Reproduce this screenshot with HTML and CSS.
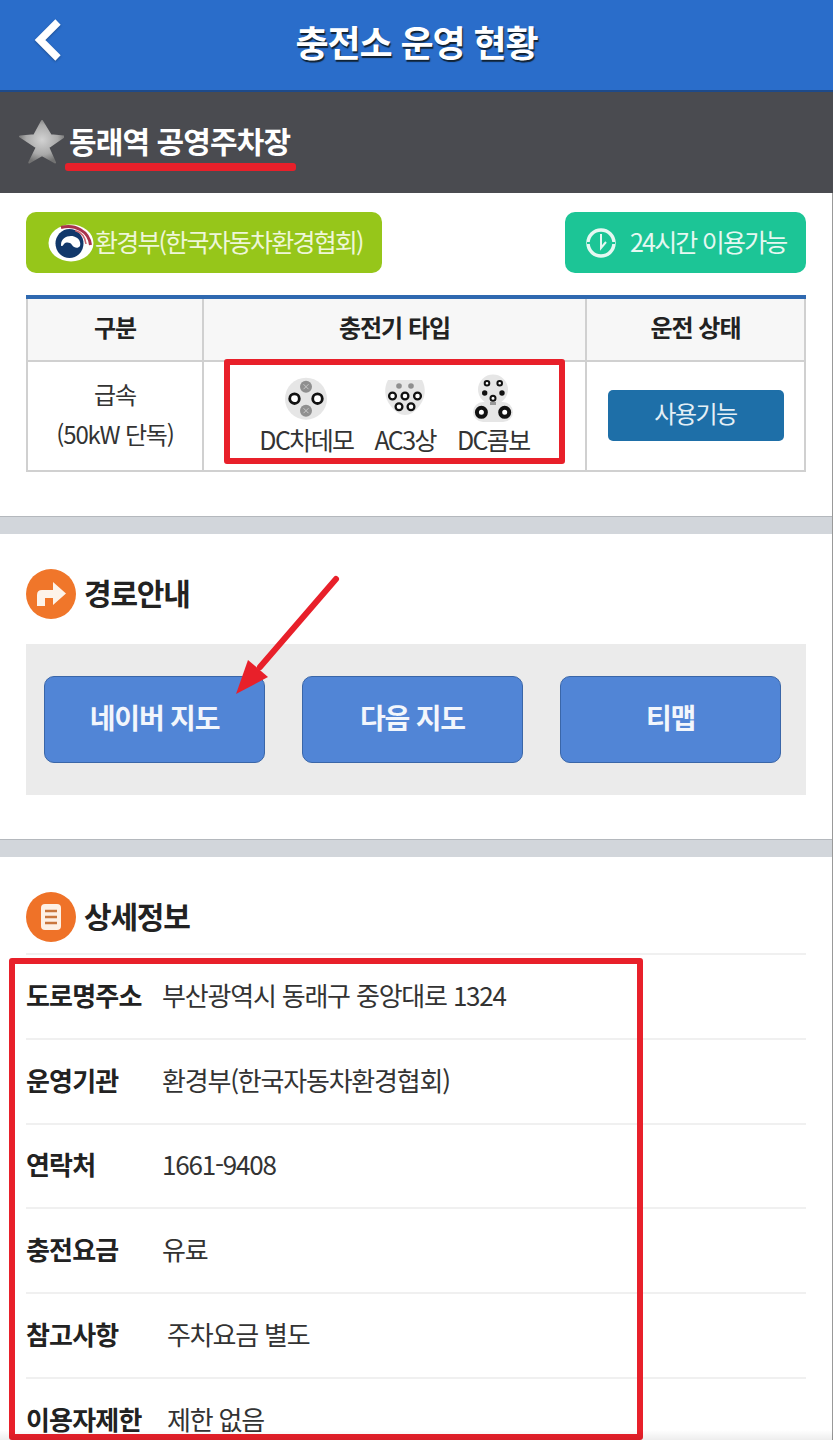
FILE: index.html
```html
<!DOCTYPE html>
<html lang="ko">

<head>
    <meta charset="UTF-8">
    <title>충전소 운영 현황</title>
    <link rel="stylesheet" href="styles.css">
</head>

<body>
    <div class="page">
        <header class="topbar">
            <svg class="back" width="40" height="56" viewBox="0 0 40 56">
                <path d="M28 8 L10 26 L28 44" fill="none" stroke="#fff" stroke-width="7.5" />
            </svg>
            <h1>충전소 운영 현황</h1>
        </header>

        <div class="station">
            <svg class="star" width="46" height="46" viewBox="0 0 46 46">
                <defs>
                    <radialGradient id="starFill" cx="0.5" cy="0.45" r="0.55">
                        <stop offset="0" stop-color="#d2d2d2" />
                        <stop offset="0.65" stop-color="#aaaaaa" />
                        <stop offset="1" stop-color="#737373" />
                    </radialGradient>
                </defs>
                <path d="M24 2 L32.700 16.200 L46 17.500 L30.300 28.500 L37 43.500 L24 36.200 L11.300 43.500 L18.700 28.500 L2 17.500 L16.300 16.200 Z" fill="url(#starFill)" stroke="url(#starFill)" stroke-width="2" stroke-linejoin="round" />
            </svg>
            <span class="station-name">동래역 공영주차장</span>
        </div>

        <div class="sheet">
            <section class="summary">
                <div class="badges">
                    <div class="badge green">
                        <svg width="48" height="38" viewBox="0 0 48 38">
                            <ellipse cx="24" cy="19" rx="22.500" ry="18.500" fill="#fff" />
                            <ellipse cx="22.500" cy="19.500" rx="14" ry="14.500" fill="#12386b" />
                            <path d="M14 21 C14 14 21 11 27 12.500 C32 14 34 18 33 22 C31 25 27 24 25 21 C23 18 19 18 17 20 C16 22 14 23 14 21 Z" fill="#fff" />
                            <path d="M14 3.500 C28 0 42 7 43.500 21" fill="none" stroke="#a8324a" stroke-width="3" />
                            <path d="M28 6.500 C34 8 38 13 39 20" fill="none" stroke="#c9656f" stroke-width="1.500" />
                        </svg>
                        <span>환경부(한국자동차환경협회)</span>
                    </div>
                    <div class="badge teal">
                        <svg width="32" height="32" viewBox="0 0 32 32">
                            <circle cx="16" cy="16" r="13" fill="none" stroke="#e6f8f2" stroke-width="3.500" />
                            <path d="M16 7 V21 L21 15" fill="none" stroke="#e6f8f2" stroke-width="2" />
                            <path d="M2 16 H5 M27 16 H30" stroke="#1cc596" stroke-width="2" />
                        </svg>
                        <span>24시간 이용가능</span>
                    </div>
                </div>

                <table class="charger">
                    <thead>
                        <tr>
                            <th class="col-kind">구분</th>
                            <th class="col-type">충전기 타입</th>
                            <th>운전 상태</th>
                        </tr>
                    </thead>
                    <tbody>
                        <tr>
                            <td>급속<br>(50kW 단독)</td>
                            <td>
                                <div class="plugs">
                                    <div class="plug">
                                        <svg width="44" height="48" viewBox="0 0 44 48">
                                            <circle cx="22" cy="24.700" r="21" fill="#e6e6e6" />
                                            <circle cx="22" cy="12.700" r="6" fill="#8f8f8f" />
                                            <circle cx="22" cy="36.700" r="6" fill="#8f8f8f" />
                                            <path d="M19.500 10.200 L24.500 15.200 M24.500 10.200 L19.500 15.200 M19.500 34.200 L24.500 39.200 M24.500 34.200 L19.500 39.200" stroke="#c8c8c8" stroke-width="1" />
                                            <circle cx="10.500" cy="24.700" r="4.800" fill="#fff" stroke="#111" stroke-width="2.800" />
                                            <circle cx="33.500" cy="24.700" r="4.800" fill="#fff" stroke="#111" stroke-width="2.800" />
                                        </svg>
                                        <span>DC차데모</span>
                                    </div>
                                    <div class="plug">
                                        <svg width="44" height="48" viewBox="0 0 44 48">
                                            <path d="M5 6 L39 6 C43 13 43 23 37 31 C32 38 27 41 22 41 C17 41 12 38 7 31 C1 23 1 13 5 6 Z" fill="#e6e6e6" />
                                            <circle cx="16" cy="12" r="2.800" fill="#8f8f8f" />
                                            <circle cx="28" cy="12" r="2.800" fill="#8f8f8f" />
                                            <g fill="#fff" stroke="#111" stroke-width="2.300">
                                                <circle cx="9.500" cy="22" r="3.400" />
                                                <circle cx="22" cy="22" r="3.400" />
                                                <circle cx="34.500" cy="22" r="3.400" />
                                                <circle cx="16" cy="32.700" r="3.400" />
                                                <circle cx="28" cy="32.700" r="3.400" />
                                            </g>
                                        </svg>
                                        <span>AC3상</span>
                                    </div>
                                    <div class="plug">
                                        <svg width="44" height="48" viewBox="0 0 44 48">
                                            <circle cx="22" cy="15.500" r="15" fill="#e6e6e6" />
                                            <rect x="2" y="28" width="40" height="20" rx="10" fill="#e6e6e6" />
                                            <g fill="#fff" stroke="#111" stroke-width="2">
                                                <circle cx="16" cy="9.300" r="2.300" />
                                                <circle cx="28.700" cy="9.300" r="2.300" />
                                                <circle cx="22" cy="24.300" r="2.500" />
                                            </g>
                                            <circle cx="13.700" cy="19" r="2.700" fill="#111" />
                                            <circle cx="31" cy="19" r="2.700" fill="#111" />
                                            <rect x="19" y="28" width="6" height="3" fill="#999" />
                                            <circle cx="10.400" cy="38.300" r="4.500" fill="#fff" stroke="#111" stroke-width="4" />
                                            <circle cx="33.700" cy="38.300" r="4.500" fill="#fff" stroke="#111" stroke-width="4" />
                                        </svg>
                                        <span>DC콤보</span>
                                    </div>
                                </div>
                            </td>
                            <td><div class="status">사용기능</div></td>
                        </tr>
                    </tbody>
                </table>
            </section>

            <div class="divider"></div>

            <section class="route">
                <h2 class="sec-title">
                    <svg width="50" height="50" viewBox="0 0 50 50">
                        <circle cx="25" cy="25" r="25" fill="#f0762a" />
                        <path d="M11 37 L11 26 Q11 21 16 21 L27 21 L27 13 L40 24.500 L27 36 L27 29 L19 29 L19 37 Z" fill="#fdf3ea" />
                    </svg>
                    <span>경로안내</span>
                </h2>
                <div class="map-box">
                    <a class="map-btn">네이버 지도</a>
                    <a class="map-btn">다음 지도</a>
                    <a class="map-btn">티맵</a>
                </div>
            </section>

            <div class="divider"></div>

            <section class="detail">
                <h2 class="sec-title">
                    <svg width="50" height="50" viewBox="0 0 50 50">
                        <circle cx="25" cy="25" r="25" fill="#ef7228" />
                        <rect x="15" y="12" width="20" height="26" rx="4" fill="#fdf0e4" />
                        <path d="M19 19 H31 M19 25 H31 M19 31 H31" stroke="#c9763c" stroke-width="2.500" />
                    </svg>
                    <span>상세정보</span>
                </h2>
                <dl class="info">
                    <div class="info-row">
                        <dt>도로명주소</dt>
                        <dd>부산광역시 동래구 중앙대로 1324</dd>
                    </div>
                    <div class="info-row">
                        <dt>운영기관</dt>
                        <dd>환경부(한국자동차환경협회)</dd>
                    </div>
                    <div class="info-row">
                        <dt>연락처</dt>
                        <dd>1661-9408</dd>
                    </div>
                    <div class="info-row">
                        <dt>충전요금</dt>
                        <dd>유료</dd>
                    </div>
                    <div class="info-row shifted">
                        <dt>참고사항</dt>
                        <dd>주차요금 별도</dd>
                    </div>
                    <div class="info-row shifted">
                        <dt>이용자제한</dt>
                        <dd>제한 없음</dd>
                    </div>
                </dl>
            </section>
        </div>

        <!-- 빨간 표시 -->
        <div class="mark-line"></div>
        <div class="mark-box plugs-mark"></div>
        <div class="mark-box info-mark"></div>
        <svg class="mark-arrow" width="120" height="130" viewBox="0 0 120 130">
            <path d="M108 4 L32 92" stroke="#e8202a" stroke-width="6" stroke-linecap="round" />
            <path d="M20 85 L40 102 L8 119 Z" fill="#e8202a" />
        </svg>
        <div class="bottom-fade"></div>
    </div>
</body>

</html>
```

FILE: styles.css
```css
* {
    box-sizing: border-box;
}

html,
body {
    margin: 0;
    padding: 0;
    background: #fff;
}

body {
    font-family: "Noto Sans CJK KR", "Noto Sans", sans-serif;
    color: #222;
}

.page {
    position: relative;
    width: 833px;
    height: 1440px;
    overflow: hidden;
}

.topbar {
    position: relative;
    height: 92px;
    background: #2a6dca;
    border-bottom: 2px solid #1d4a8a;
    display: flex;
    align-items: center;
    justify-content: center;
}

.topbar h1 {
    margin: 0 0 8px;
    font-size: 36px;
    font-weight: 700;
    letter-spacing: -1.1px;
    color: #fff;
    text-shadow: 1px 2px 1px #123;
}

.back {
    position: absolute;
    left: 30px;
    top: 14px;
    filter: drop-shadow(0 1px 1px rgba(0, 0, 0, .3));
}

.station {
    height: 101px;
    background: #4a4b50;
    display: flex;
    align-items: center;
    padding: 0 0 2px 18px;
    gap: 5px;
}

.station-name {
    font-size: 30px;
    font-weight: 700;
    letter-spacing: -.9px;
    color: #fff;
    margin-top: -3px;
}

.sheet {
    border-right: 1px solid #999;
}

.summary {
    padding: 19px 26px 44px;
}

.badges {
    display: flex;
    justify-content: space-between;
    margin-bottom: 22px;
}

.badge {
    height: 61px;
    border-radius: 10px;
    display: flex;
    align-items: center;
    padding-bottom: 4px;
    color: #eef6d8;
    font-size: 25px;
    letter-spacing: -1.8px;
}

.badge.green {
    width: 356px;
    padding-left: 21px;
    background: #96c61a;
}

.badge.green svg {
    margin-top: 4px;
}

.badge.teal {
    width: 241px;
    padding-left: 20px;
    gap: 13px;
    background: #1cc596;
    color: #e6f8f2;
}

.badge.teal svg {
    margin-top: 4px;
}

.charger {
    width: 780px;
    table-layout: fixed;
    border-collapse: collapse;
    border-top: 4px solid #2f69b0;
}

.charger th,
.charger td {
    border: 2px solid #d0d0d0;
    text-align: center;
    padding: 0;
}

.charger thead tr {
    height: 64px;
}

.charger tbody tr {
    height: 110px;
}

.charger th {
    border-top: 0;
    padding-bottom: 6px;
    background: #f7f7f7;
    font-size: 24px;
    font-weight: 700;
    letter-spacing: -1px;
}

.charger td {
    padding-bottom: 5px;
    font-size: 24px;
    line-height: 40px;
    letter-spacing: -1.2px;
    color: #333;
}

.col-kind {
    width: 176px;
}

.col-type {
    width: 383px;
}

.plugs {
    display: flex;
    justify-content: center;
    gap: 21px;
}

.plug {
    display: flex;
    flex-direction: column;
    align-items: center;
    line-height: 30px;
    font-size: 25px;
    letter-spacing: -1.6px;
}

.plug svg {
    display: block;
    margin-bottom: 2px;
}

.status {
    width: 176px;
    height: 51px;
    margin: 3px auto 0;
    border-radius: 5px;
    background: #1e6fa8;
    color: #e4eff6;
    line-height: 46px;
    font-size: 24px;
    letter-spacing: -1.5px;
}

.divider {
    height: 18px;
    background: #d2d6db;
    border-top: 1px solid #b4b8bd;
}

.sec-title {
    display: flex;
    align-items: center;
    gap: 8px;
    margin: 0;
    height: 50px;
    font-size: 30px;
    font-weight: 700;
    letter-spacing: -1.2px;
    color: #222;
}

.sec-title span {
    margin-top: -4px;
}

.route {
    padding: 35px 26px 44px;
}

.map-box {
    margin-top: 25px;
    height: 151px;
    padding: 32px 25px 32px 18px;
    background: #ebebeb;
    display: grid;
    grid-template-columns: repeat(3, 1fr);
    gap: 37px;
}

.map-btn {
    display: flex;
    align-items: center;
    justify-content: center;
    padding-bottom: 6px;
    border: 1px solid #3a66a8;
    border-radius: 10px;
    background: #5185d6;
    color: #f2f6fc;
    font-size: 28px;
    font-weight: 700;
    letter-spacing: -1.2px;
}

.detail {
    padding: 35px 26px 0;
}

.info {
    margin: 11px 0 0;
}

.info-row {
    display: flex;
    align-items: center;
    height: 84.8px;
    padding-bottom: 4px;
    border-top: 2px solid #f0f0f0;
}

.info-row dt {
    width: 136px;
    font-size: 26px;
    font-weight: 700;
    letter-spacing: -.8px;
}

.info-row dd {
    margin: 0;
    font-size: 26px;
    letter-spacing: -1.2px;
    color: #333;
}

.info-row.shifted dd {
    margin-left: 5px;
}

.mark-line {
    position: absolute;
    left: 65px;
    top: 163px;
    width: 231px;
    height: 8px;
    border-radius: 3px;
    background: #e8202a;
}

.mark-box {
    position: absolute;
    border: 6px solid #e8202a;
    border-radius: 3px;
}

.plugs-mark {
    left: 224px;
    top: 359px;
    width: 341px;
    height: 105px;
}

.info-mark {
    left: 9px;
    top: 958px;
    width: 634px;
    height: 482px;
}

.mark-arrow {
    position: absolute;
    left: 228px;
    top: 575px;
}

.bottom-fade {
    position: absolute;
    left: 0;
    right: 0;
    bottom: 0;
    height: 10px;
    background: linear-gradient(rgba(0, 0, 0, 0), rgba(0, 0, 0, .07));
}
```
